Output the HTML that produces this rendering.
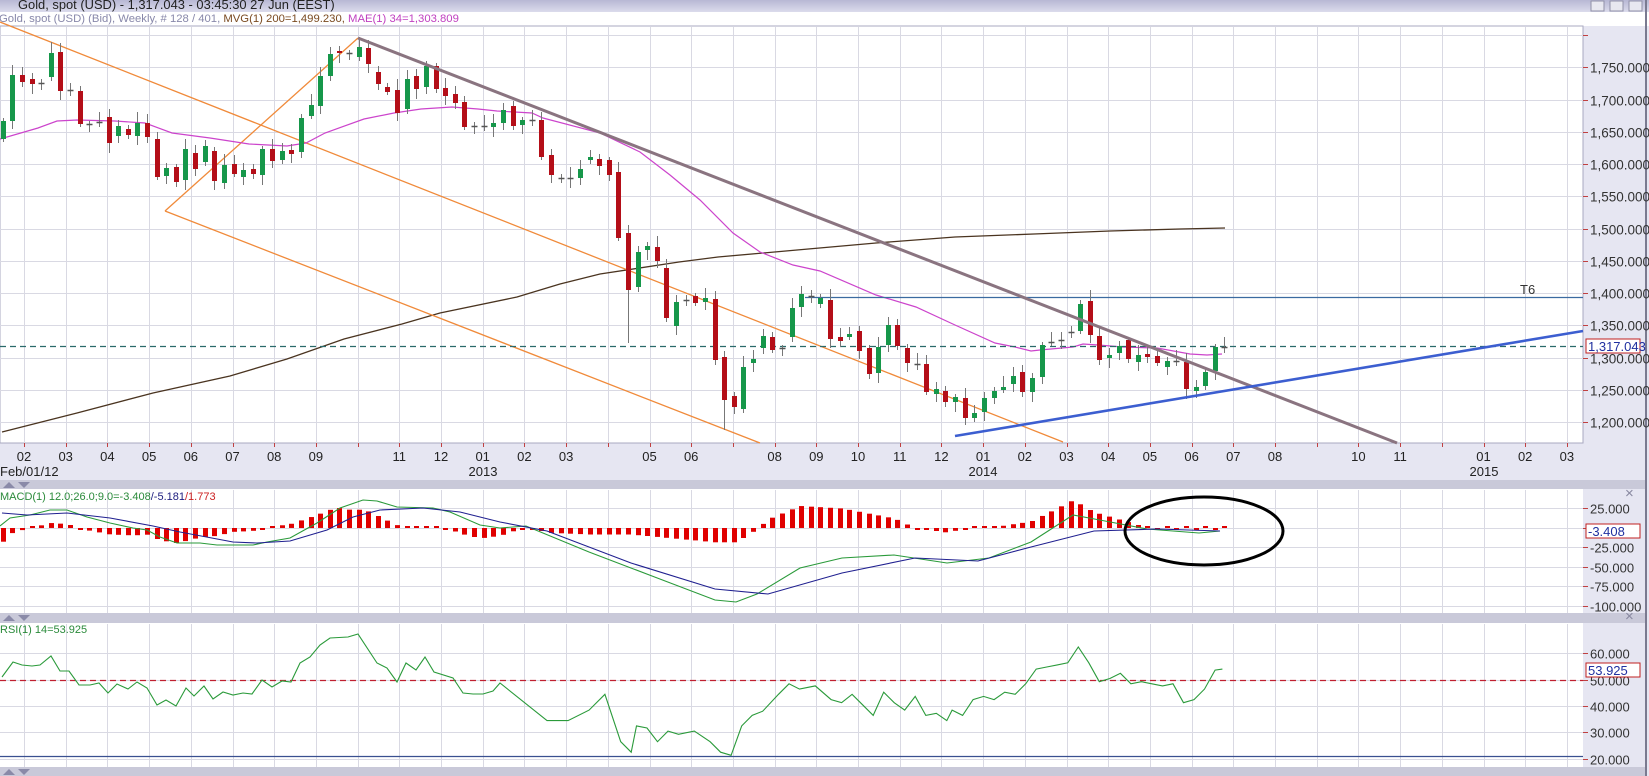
<!DOCTYPE html>
<html><head><meta charset="utf-8"><style>
html,body{margin:0;padding:0;width:1649px;height:776px;overflow:hidden;background:#e6e6f2;font-family:"Liberation Sans",sans-serif}
svg{display:block}
</style></head><body>
<svg id="s" width="1649" height="776" xmlns="http://www.w3.org/2000/svg" font-family="Liberation Sans, sans-serif">
<defs><linearGradient id="tb" x1="0" y1="0" x2="0" y2="1"><stop offset="0" stop-color="#b8b8d4"/><stop offset="1" stop-color="#dcdcec"/></linearGradient></defs>
<rect x="0" y="0" width="1649" height="776" fill="#e6e6f2"/>
<rect x="0" y="0" width="1649" height="12" fill="url(#tb)"/>
<text x="18" y="9" font-size="12.9" fill="#222">Gold, spot (USD) - 1,317.043 - 03:45:30  27 Jun (EEST)</text>
<rect x="1591" y="1" width="13" height="10" fill="#e8e8f0" stroke="#9090a8"/><rect x="1610" y="1" width="13" height="10" fill="#e8e8f0" stroke="#9090a8"/><rect x="1629" y="1" width="13" height="10" fill="#e8e8f0" stroke="#9090a8"/>
<rect x="0" y="12" width="1649" height="14" fill="#ffffff"/>
<text x="-1" y="22" font-size="11.3"><tspan fill="#8888aa">Gold, spot (USD) (Bid), Weekly, # 128 / 401, </tspan><tspan fill="#7a4a20">MVG(1) 200=1,499.230, </tspan><tspan fill="#c040c0">MAE(1) 34=1,303.809</tspan></text>
<rect x="0" y="26" width="1583" height="417" fill="#fff" stroke="#a8a8c0"/>
<rect x="0" y="489" width="1583" height="124" fill="#fff"/>
<rect x="0" y="623" width="1583" height="144" fill="#fff"/>
<rect x="0" y="480" width="1645" height="9" fill="#c9c9d9"/>
<rect x="0" y="613" width="1645" height="10" fill="#c9c9d9"/>
<rect x="0" y="767" width="1645" height="9" fill="#c9c9d9"/>
<line x1="1646" y1="0" x2="1646" y2="776" stroke="#7a7a90" stroke-width="2"/>
<g id="g"></g>
</svg>
<script>
var S=document.getElementById('g'),h='';
function L(x1,y1,x2,y2,c,w,d){h+='<line x1="'+x1+'" y1="'+y1+'" x2="'+x2+'" y2="'+y2+'" stroke="'+c+'" stroke-width="'+(w||1)+'"'+(d?' stroke-dasharray="'+d+'"':'')+'/>';}
function P(pts,c,w,sc){var s=sc||1;h+='<polyline fill="none" stroke="'+c+'" stroke-width="'+(w||1)+'" points="'+pts.map(function(p){return (p[0]*s).toFixed(1)+','+(p[1]*s).toFixed(1)}).join(' ')+'"/>';}
function T(x,y,t,c,sz,a){h+='<text x="'+x+'" y="'+y+'" font-size="'+(sz||13)+'" fill="'+(c||'#222')+'"'+(a?' text-anchor="'+a+'"':'')+'>'+t+'</text>';}
var gc='#d9d9e3';
var mx=[];for(var k=0;k<38;k++)mx.push(24+41.7*k);
mx.forEach(function(x){if(x>1582)return;x=Math.round(x)+.5;L(x,27,x,443,gc);L(x,490,x,613,gc);L(x,624,x,767,gc);L(x,443,x,447,'#c04040');});
for(var p=1800;p>=1200;p-=50){var y=293+(1400-p)*0.645;if(y<27)continue;y=Math.round(y)+.5;L(0,y,1583,y,gc);L(1583,y,1588,y,'#c04040');
 if(p<=1750){var s=(p/1000|0)+','+String(p%1000).padStart(3,'0')+'.000';T(1590,y+5,s,'#333',13.5);}}
[[25,508],[-25,547],[-50,567],[-75,586],[-100,606],[0,528]].forEach(function(a){var y=a[1]+.5;L(0,y,1583,y,gc);L(1583,y,1588,y,'#c04040');if(a[0]!==0)T(1590,y+5,a[0]+'.000','#333',13);});
[[60,653],[50,680],[40,706],[30,732],[20,759]].forEach(function(a){var y=a[1]+.5;L(0,y,1583,y,gc);L(1583,y,1588,y,'#c04040');T(1590,y+5,a[0]+'.000','#333',13);});
var lab={0:'02',1:'03',2:'04',3:'05',4:'06',5:'07',6:'08',7:'09',9:'11',10:'12',11:'01',12:'02',13:'03',15:'05',16:'06',18:'08',19:'09',20:'10',21:'11',22:'12',23:'01',24:'02',25:'03',26:'04',27:'05',28:'06',29:'07',30:'08',32:'10',33:'11',35:'01',36:'02',37:'03'};
for(var k in lab){T(24+41.7*k,461,lab[k],'#222',13,'middle');}
T(0,476,'Feb/01/12','#222',13);T(483,476,'2013','#222',13,'middle');T(983,476,'2014','#222',13,'middle');T(1484,476,'2015','#222',13,'middle');
function tri(y){h+='<polygon points="3,'+(y+7)+' 9,'+(y+1)+' 15,'+(y+7)+'" fill="#8a8aa8"/><polygon points="18,'+(y+1)+' 30,'+(y+1)+' 24,'+(y+7)+'" fill="#8a8aa8"/>';}
tri(481);tri(614);tri(768);
T(1625,498,'×','#8888a0',15);T(1625,621,'×','#8888a0',15);
P([[2,432],[77,413],[153,393],[230,376],[287,359],[344,339],[402,324],[440,313],[517,297],[560,284],[600,274],[679,262],[718,257],[797,250],[876,243],[955,237],[1034,234],[1110,231],[1180,229],[1225,228]],'#4a3420',1.3);
L(0,22,1063,442,'#f08a3a',1.3);L(165,211,760,443,'#f08a3a',1.3);L(165,211,358,38,'#f08a3a',1.3);
P([[0,139],[38,128],[57,121],[77,120],[115,121],[145,123],[172,133],[210,138],[249,144],[287,146],[306,143],[325,133],[364,119],[394,113],[421,109],[452,107],[478,109],[497,111],[532,113],[543,118],[600,133],[640,152],[670,175],[700,200],[733,233],[760,252],[793,265],[820,271],[876,295],[916,307],[955,325],[995,343],[1015,347],[1031,351],[1040,350],[1073,347],[1083,344],[1098,345],[1123,347],[1157,348],[1190,354],[1207,355],[1222,354]],'#cc44cc',1.2);
L(805,297.5,1583,297.5,'#3a6aa0',1.2);T(1520,294,'T6','#333',13);
L(0,346.5,1583,346.5,'#2a6a6a',1.2,'6,4');
var C=[['g',121,139],['g',75,121],['r',75,82],['r',79,84],['d',83],['g',53,77],['r',52,91],['d',90],['r',91,124],['d',124],['d',122],['r',117,143],['g',126,136],['r',129,135],['g',123,136],['r',123,137],['r',139,177],['g',168,176],['r',167,182],['g',149,180],['r',153,169],['g',146,162],['r',151,181],['g',165,183],['r',164,174],['g',170,177],['r',169,174],['g',149,175],['r',149,161],['g',151,160],['r',150,154],['g',118,152],['g',105,116],['g',76,106],['g',54,76],['r',51,53],['d',53],['g',47,57],['r',48,64],['r',72,84],['r',87,92],['r',90,113],['g',79,109],['r',76,89],['g',66,87],['r',66,89],['r',88,96],['r',94,103],['r',102,127],['d',126],['d',126],['g',123,127],['g',110,123],['r',106,126],['g',120,125],['d',120],['r',120,157],['r',155,175],['d',178],['d',178],['g',169,178],['g',157,160],['r',159,166],['r',160,175],['r',172,238],['r',233,290],['g',252,287],['g',246,250],['r',247,261],['r',268,318],['g',302,326],['d',300],['r',296,303],['g',298,302],['r',299,360],['r',357,400],['r',396,407],['g',367,409],['g',359,363],['g',336,348],['r',337,350],['d',348],['g',308,337],['g',294,307],['d',296],['g',298,304],['r',300,339],['r',337,341],['g',334,337],['r',331,351],['r',348,374],['g',347,373],['g',325,345],['r',325,346],['r',348,363],['d',364],['r',364,392],['g',389,394],['r',391,402],['g',397,402],['r',398,418],['g',413,418],['g',398,412],['g',391,398],['g',387,390],['g',376,384],['r',372,392],['g',378,392],['g',345,377],['d',342],['d',340],['d',332],['g',304,331],['r',301,335],['r',336,360],['g',355,358],['g',346,353],['r',340,359],['g',355,362],['r',354,357],['r',356,363],['g',361,367],['d',361],['r',362,389],['g',387,391],['g',372,386],['g',347,371],['d',347]];
C.forEach(function(c,i){var x=Math.round(2.7+9.62*i);var t=c[1],b=c[2]===undefined?c[1]:c[2];var wt=3+(i*7%9),wb=3+(i*5%8);if(i==65)wb=53;if(i==75)wb=30;
 L(x+.5,t-wt,x+.5,b+wb,'#777',1);
 if(c[0]=='d'){L(x-2.5,t+.5,x+3.5,t+.5,'#555',1.5);}
 else{h+='<rect x="'+(x-2)+'" y="'+t+'" width="5" height="'+Math.max(2,b-t)+'" fill="'+(c[0]=='g'?'#16974a':'#b40e18')+'"/>';}});
L(358,38,1397,443,'#8a7480',3);
L(955,436,1583,331,'#3c5ed0',2.6);
h+='<rect x="1586" y="339" width="54" height="14" fill="#fff" stroke="#c02020"/>';T(1588,351,'1,317.043','#2030a0',13);
h+='<text x="0" y="500" font-size="11"><tspan fill="#2a8a3a">MACD(1) 12.0;26.0;9.0=-3.408</tspan><tspan fill="#202080">/-5.181</tspan><tspan fill="#cc2020">/1.773</tspan></text>';
h+='<rect x="1586" y="524" width="54" height="14" fill="#fff" stroke="#c02020"/>';T(1588,536,'-3.408','#2030a0',13);
T(0,633,'RSI(1) 14=53.925','#2a8a3a',11);
h+='<rect x="1586" y="663" width="54" height="14" fill="#fff" stroke="#c02020"/>';T(1588,675,'53.925','#2030a0',13);
var G=[[0,526],[10,518],[30,515],[50,510],[67,510],[87,517],[110,523],[133,528],[147,530],[160,537],[177,543],[200,543],[217,545],[253,545],[267,542],[290,538],[317,523],[340,508],[363,500],[377,501],[397,507],[433,508],[450,512],[480,525],[500,528],[526,526],[589,552],[652,576],[715,600],[736,602],[757,594],[800,568],[842,558],[894,555],[947,563],[989,558],[1031,542],[1073,515],[1105,521],[1147,529],[1199,533],[1220,531]];
var B=[[2,513],[27,515],[67,513],[110,518],[153,526],[180,532],[233,542],[257,543],[290,541],[327,530],[353,517],[380,510],[423,508],[460,512],[500,522],[547,531],[631,563],[715,589],[768,594],[842,573],[915,558],[978,561],[1031,547],[1094,531],[1157,529],[1220,531]];
function itp(a,x){for(var i=1;i<a.length;i++)if(a[i][0]>=x){var p=a[i-1],q=a[i];return p[1]+(q[1]-p[1])*(x-p[0])/(q[0]-p[0]);}return a[a.length-1][1];}
for(var i=0;i<128;i++){var x=Math.round(2.7+9.62*i);var v=(itp(B,x)-itp(G,x))*1.3;if(i>118)v=(i%2?2:-2);if(Math.abs(v)<2)v=v<0?-2:2;
 h+='<rect x="'+(x-2)+'" y="'+(v>0?528-v:528)+'" width="5" height="'+Math.abs(v).toFixed(1)+'" fill="#e00000"/>';}
P(G,'#2a9a3a',1.1);P(B,'#202090',1.1);
h+='<ellipse cx="1204" cy="531" rx="79" ry="34" fill="none" stroke="#000" stroke-width="3"/>';
L(0,680.5,1583,680.5,'#c02030',1.2,'6,4');
L(0,756.5,1583,756.5,'#3a5090',1.2);
var R=[[2,677],[13,662],[22,665],[32,666],[40,665],[51,656],[60,671],[69,671],[79,685],[90,685],[99,683],[108,693],[117,684],[128,689],[137,682],[147,688],[157,705],[166,700],[176,706],[186,688],[194,696],[204,686],[213,699],[223,692],[233,695],[243,693],[252,694],[262,680],[272,687],[282,681],[291,682],[300,663],[310,657],[320,645],[330,638],[348,637],[358,634],[377,663],[387,668],[397,682],[406,663],[416,670],[425,657],[434,672],[453,678],[463,693],[473,694],[483,694],[493,691],[500,683]];
var R2=[[500,670],[520,685],[540,685],[560,675],[575,660],[590,705],[600,715],[605,690],[615,692],[625,705],[635,695],[645,698],[660,695],[675,705],[685,715],[695,718],[705,690],[715,680],[725,676],[740,660],[750,650],[760,655],[775,652],[790,665],[800,668],[810,660],[820,670],[830,680],[840,658],[850,668],[860,675],[870,662],[880,680],[890,678],[900,685],[905,675],[915,680],[925,665],[935,662],[945,665],[955,658],[965,660],[975,650],[985,636],[995,634],[1005,632],[1015,630],[1025,615],[1035,630],[1045,648],[1055,645],[1065,640],[1075,650],[1085,648],[1095,650],[1105,652],[1115,650],[1125,668],[1135,665],[1145,655],[1155,637],[1162,636]].map(function(p){return [p[0]*1.052,p[1]*1.052];});
P(R.concat(R2.slice(1)),'#2a9a3a',1.1);
S.innerHTML=h;
</script>
</body></html>
